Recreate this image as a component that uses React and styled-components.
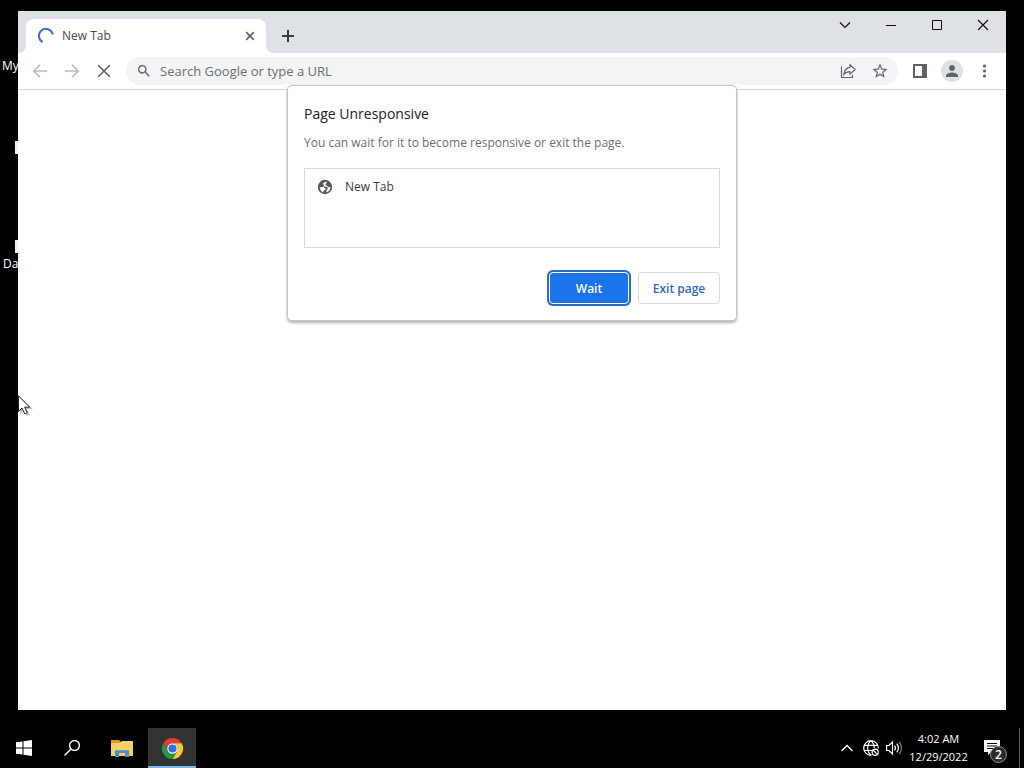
import React from "react";
import styled, { createGlobalStyle, css } from "styled-components";

const GlobalStyle = createGlobalStyle`
  * { box-sizing: border-box; }
  body { margin: 0; background: #000; font-family: "Open Sans", "Noto Sans", sans-serif; }
  button, input { font-family: inherit; }
  button { padding: 0; border: 0; background: none; cursor: default; }
  svg { display: block; flex: none; }
`;

const Screen = styled.div`
  display: flex;
  flex-direction: column;
  min-height: 100vh;
  background: #000;
`;

const Desktop = styled.main`
  position: relative;
  flex: 1;
  display: flex;
  padding: 11px 18px 18px;
`;

const Shortcut = styled.div`
  position: absolute;
  left: ${(p) => p.$x}px;
  top: ${(p) => p.$y}px;
  color: #fff;
  font-size: 12px;
  line-height: 16px;
`;

const ShortcutIcon = styled(Shortcut)`
  width: 3px;
  height: 13px;
  background: #f2f2f2;
`;

const Pointer = styled.svg`
  position: absolute;
  left: 18px;
  top: 395px;
`;

const Window = styled.section`
  position: relative;
  flex: 1;
  min-width: 0;
  display: flex;
  flex-direction: column;
  background: #fff;
`;

const TabStrip = styled.header`
  display: flex;
  align-items: flex-end;
  height: 42px;
  padding-left: 8px;
  background: #dee1e6;
`;

const Tab = styled.div`
  position: relative;
  display: flex;
  align-items: center;
  gap: 8px;
  width: 240px;
  height: 34px;
  padding: 0 8px 0 12px;
  border-radius: 8px 8px 0 0;
  background: #fff;
  color: #45484c;
  font-size: 12px;
  line-height: 16px;

  &::before,
  &::after {
    content: "";
    position: absolute;
    bottom: 0;
    width: 8px;
    height: 8px;
  }
  &::before {
    right: 100%;
    background: radial-gradient(circle at 0 0, transparent 8px, #fff 8px);
  }
  &::after {
    left: 100%;
    background: radial-gradient(circle at 100% 0, transparent 8px, #fff 8px);
  }
`;

const TabTitle = styled.span`
  flex: 1;
`;

const IconButton = styled.button`
  display: flex;
  align-items: center;
  justify-content: center;
  flex: none;
  width: ${(p) => p.$size || 28}px;
  height: ${(p) => p.$size || 28}px;
  border-radius: 50%;
  color: ${(p) => (p.disabled ? "#babcbe" : "#5f6368")};
`;

const NewTabButton = styled(IconButton)`
  margin: 0 0 3px 8px;
  color: #3c4043;
`;

const WindowControls = styled.div`
  display: flex;
  align-self: flex-start;
  margin-left: auto;
`;

const WindowButton = styled.button`
  display: flex;
  align-items: center;
  justify-content: center;
  width: 46px;
  height: 28px;
  color: #111;
`;

const Toolbar = styled.nav`
  display: flex;
  align-items: center;
  gap: 4px;
  height: 37px;
  padding: 0 8px;
  border-bottom: 1px solid #d5d7da;
`;

const Omnibox = styled.div`
  flex: 1;
  min-width: 0;
  display: flex;
  align-items: center;
  gap: 4px;
  height: 28px;
  margin: 0 4px;
  padding: 0 4px 0 10px;
  border-radius: 14px;
  background: #f3f4f5;
  color: #5f6368;
`;

const AddressInput = styled.input`
  flex: 1;
  min-width: 0;
  height: 28px;
  margin-left: 4px;
  padding: 0;
  border: 0;
  outline: 0;
  background: transparent;
  color: #202124;
  font-size: 13px;

  &::placeholder {
    color: #6b6f73;
    opacity: 1;
  }
`;

const Avatar = styled.span`
  display: flex;
  align-items: center;
  justify-content: center;
  width: 22px;
  height: 22px;
  border-radius: 50%;
  background: #dee1e6;
`;

const Dialog = styled.section`
  position: absolute;
  top: 75px;
  left: 50%;
  width: 448px;
  margin-left: -224px;
  padding: 16px;
  border-radius: 4px;
  background: #fff;
  box-shadow: 0 0 0 1px #c4c4c4, 0 2px 3px 1px rgba(0, 0, 0, 0.3);
`;

const DialogTitle = styled.h1`
  margin: 0;
  color: #202124;
  font-size: 14px;
  font-weight: 400;
  line-height: 24px;
`;

const DialogText = styled.p`
  margin: 7px 0 15px;
  color: #6b6f73;
  font-size: 12px;
  line-height: 20px;
`;

const PageList = styled.ul`
  height: 80px;
  margin: 0;
  padding: 8px 12px;
  border: 1px solid #d8dade;
  list-style: none;
`;

const PageItem = styled.li`
  display: flex;
  align-items: center;
  gap: 12px;
  height: 20px;
  color: #3a3d40;
  font-size: 12px;
  line-height: 16px;
`;

const Actions = styled.div`
  display: flex;
  justify-content: flex-end;
  gap: 9px;
  margin-top: 24px;
`;

const ActionButton = styled.button`
  width: 82px;
  height: 32px;
  border-radius: 4px;
  font-size: 12px;
  font-weight: 600;
  ${(p) =>
    p.$primary
      ? css`
          width: 80px;
          border: 1px solid #fff;
          background: #1a73e8;
          color: #fff;
          box-shadow: 0 0 0 2px #2a6ebb;
        `
      : css`
          border: 1px solid #dadce0;
          background: #fff;
          color: #3367c0;
        `}
`;

const Taskbar = styled.footer`
  display: flex;
  height: 40px;
  color: #fff;
`;

const TaskButton = styled.button`
  display: flex;
  align-items: center;
  justify-content: center;
  width: ${(p) => p.$width || 48}px;
  height: 40px;
  color: #fff;
  ${(p) =>
    p.$active &&
    css`
      background: #333;
      box-shadow: inset 0 -2px #76b9ed;
    `}
`;

const Tray = styled.div`
  display: flex;
  align-items: center;
  margin-left: auto;
`;

const Clock = styled.time`
  width: 67px;
  font-size: 11px;
  line-height: 18px;
  text-align: center;
  white-space: nowrap;
`;

const Notifications = styled(TaskButton)`
  position: relative;
  width: 47px;
  padding-right: 8px;
`;

const Count = styled.span`
  position: absolute;
  left: 18px;
  top: 18px;
  width: 17px;
  height: 17px;
  border: 1px solid #8a8a8a;
  border-radius: 50%;
  background: #2b2b2b;
  font-size: 12px;
  font-weight: 600;
  line-height: 15px;
  text-align: center;
`;

const ShowDesktop = styled.button`
  width: 5px;
  height: 40px;
  border-left: 1px solid #5c5c5c;
`;

const Icon = ({ size = 16, box = 24, children, ...rest }) => (
  <svg width={size} height={size} viewBox={`0 0 ${box} ${box}`} fill="currentColor" aria-hidden="true" {...rest}>
    {children}
  </svg>
);

const Line = ({ size = 16, width = 1, d, children }) => (
  <Icon size={size} box={size} fill="none" stroke="currentColor" strokeWidth={width}>
    {d && <path d={d} />}
    {children}
  </Icon>
);

const Spinner = () => (
  <Icon box={16} fill="none" stroke="#3d6fc4" strokeWidth="2">
    <path d="M4.600 14A7 7 0 1 1 14.800 6.500" />
  </Icon>
);

const ChromeLogo = () => (
  <Icon size={23} box={48}>
    <path fill="#e33b2e" d="M4.900 13A22 22 0 0 1 43.100 13H24a11 11 0 0 0-9.500 16.500z" />
    <path fill="#fcc934" d="M43.100 13A22 22 0 0 1 24 46l9.500-16.500A11 11 0 0 0 24 13z" />
    <path fill="#1e9a4b" d="M24 46A22 22 0 0 1 4.900 13l9.600 16.500A11 11 0 0 0 33.500 29.500z" />
    <circle cx="24" cy="24" r="11" fill="#fff" />
    <circle cx="24" cy="24" r="8.600" fill="#2f6fe0" />
  </Icon>
);

const FolderIcon = () => (
  <svg width="22" height="18" viewBox="0 0 22 18" aria-hidden="true">
    <path fill="#d99a2b" d="M0 1h8l2 2v3H0z" />
    <path fill="#f5cf68" d="M0 4h9l2-2h11v15H0z" />
    <path fill="#4a90c4" d="M4 11h14v7h-4v-4H8v4H4z" />
    <path fill="#5fa6d6" d="M4 11h14v1H4z" />
  </svg>
);

export default function App() {
  return (
    <Screen>
      <GlobalStyle />
      <Desktop>
        <Shortcut $x={2} $y={58}>My</Shortcut>
        <ShortcutIcon $x={15} $y={141} />
        <ShortcutIcon $x={15} $y={240} />
        <Shortcut $x={3} $y={256}>Da</Shortcut>

        <Window>
          <TabStrip>
            <Tab>
              <Spinner />
              <TabTitle>New Tab</TabTitle>
              <IconButton $size={16} aria-label="Close tab">
                <Line size={10} width={1.7} d="M1.200 1.200l7.600 7.600M8.800 1.200L1.200 8.800" />
              </IconButton>
            </Tab>
            <NewTabButton aria-label="New tab">
              <Line size={12} width={2} d="M6 0v12M0 6h12" />
            </NewTabButton>
            <WindowControls>
              <WindowButton aria-label="Search tabs">
                <Line size={12} width={1.2} d="M1 3.500l5 5 5-5" />
              </WindowButton>
              <WindowButton aria-label="Minimize">
                <Line size={10} d="M0 5.500h10" />
              </WindowButton>
              <WindowButton aria-label="Maximize">
                <Line size={10} d="M.5 .5h9v9h-9z" />
              </WindowButton>
              <WindowButton aria-label="Close">
                <Line size={12} width={1.2} d="M1 1l10 10M11 1L1 11" />
              </WindowButton>
            </WindowControls>
          </TabStrip>

          <Toolbar>
            <IconButton disabled aria-label="Back">
              <Line width={1.6} d="M15 8H2M8 1.800L1.800 8 8 14.200" />
            </IconButton>
            <IconButton disabled aria-label="Forward">
              <Line width={1.6} d="M1 8h13M8 1.800L14.200 8 8 14.200" />
            </IconButton>
            <IconButton aria-label="Stop">
              <Line size={14} width={1.6} d="M1.200 1.200l11.600 11.600M12.800 1.200L1.200 12.800" />
            </IconButton>
            <Omnibox>
              <Icon>
                <path d="M15.500 14h-.79l-.28-.27A6.470 6.470 0 0 0 16 9.500 6.500 6.500 0 1 0 9.500 16c1.610 0 3.090-.59 4.230-1.570l.27.28v.79l5 4.990L20.490 19l-4.990-5zm-6 0C7.010 14 5 11.990 5 9.500S7.010 5 9.500 5 14 7.010 14 9.500 11.990 14 9.500 14z" />
              </Icon>
              <AddressInput aria-label="Address and search bar" placeholder="Search Google or type a URL" />
              <IconButton aria-label="Share">
                <Line width={1.2}>
                  <path d="M1.500 3.500v11h11V12M10 1.800l5.200 4.700L10 11.200V8.700C7.500 8.700 5.500 9.200 3.800 11.500c.4-4 2.700-6.700 6.200-7.200z" />
                </Line>
              </IconButton>
              <IconButton aria-label="Bookmark this tab">
                <Icon size={18}>
                  <path d="M22 9.240l-7.190-.62L12 2 9.190 8.630 2 9.240l5.460 4.730L5.820 21 12 17.270 18.180 21l-1.630-7.030L22 9.240zM12 15.400l-3.760 2.270 1-4.280-3.320-2.880 4.380-.38L12 6.100l1.710 4.040 4.380.38-3.320 2.880 1 4.280L12 15.400z" />
                </Icon>
              </IconButton>
            </Omnibox>
            <IconButton aria-label="Side panel">
              <Icon size={14} box={14}>
                <path fillRule="evenodd" d="M0 0h14v14H0zM2 2v10h7V2z" />
              </Icon>
            </IconButton>
            <IconButton aria-label="Profile">
              <Avatar>
                <Icon size={18}>
                  <path d="M12 12c2.210 0 4-1.790 4-4s-1.790-4-4-4-4 1.790-4 4 1.790 4 4 4zm0 2c-2.670 0-8 1.340-8 4v2h16v-2c0-2.660-5.330-4-8-4z" />
                </Icon>
              </Avatar>
            </IconButton>
            <IconButton aria-label="Menu">
              <Icon box={16}>
                <circle cx="8.500" cy="3" r="1.600" />
                <circle cx="8.500" cy="8" r="1.600" />
                <circle cx="8.500" cy="13" r="1.600" />
              </Icon>
            </IconButton>
          </Toolbar>

          <Dialog role="dialog" aria-labelledby="dialog-title">
            <DialogTitle id="dialog-title">Page Unresponsive</DialogTitle>
            <DialogText>You can wait for it to become responsive or exit the page.</DialogText>
            <PageList>
              <PageItem>
                <Icon box={16} color="#55585c">
                  <circle cx="8" cy="8" r="7.200" />
                  <path fill="#fff" d="M9.800 2.700C8 2.600 6.200 3.600 5.600 5.200c1 .2 1.500.8 1.300 1.700-.2 1-1.200 1.200-2.200 1.200l-2 .3c.2 2.300 1.600 4.200 3.700 5-.3-1 .2-1.900 1.100-2.200 1.100-.3 1.500-1.100.8-1.900-.7-.7-1.500-.8-1.200-1.400.4-.6 2.100-.5 3 .1.900.7.800 1.700 0 2.500-.7.700-1 1.700-.6 2.800 1.600-.5 3-1.800 3.600-3.400l.3-1.900c-1.100.2-2.100 0-2.800-.8-.6-.7-1.700-.6-2-1.500-.3-1 .7-1.300 1-2z" />
                </Icon>
                New Tab
              </PageItem>
            </PageList>
            <Actions>
              <ActionButton $primary>Wait</ActionButton>
              <ActionButton>Exit page</ActionButton>
            </Actions>
          </Dialog>
        </Window>

        <Pointer width="16" height="22" viewBox="0 0 16 22" aria-hidden="true">
          <path d="M2 2v17l4-4 3 6 3-1-3-6h6z" fill="#000" opacity=".25" />
          <path d="M.5 .8v15.700l3.600-3.400 2.600 5.700 2.500-1.100-2.500-5.500h5z" fill="#fff" stroke="#222" />
        </Pointer>
      </Desktop>

      <Taskbar>
        <TaskButton aria-label="Start">
          <Icon box={16}>
            <path d="M0 2.300l6.500-.9v6.100H0zM7.500 1.200L16 0v7.500H7.500zM0 8.500h6.500v6.100L0 13.700zM7.500 8.500H16V16l-8.500-1.200z" />
          </Icon>
        </TaskButton>
        <TaskButton aria-label="Search">
          <Line>
            <circle cx="10.500" cy="5.500" r="4.900" strokeWidth="1.400" />
            <path d="M7 9L.5 15.500" strokeWidth="1.400" />
          </Line>
        </TaskButton>
        <TaskButton $width={52} aria-label="File Explorer">
          <FolderIcon />
        </TaskButton>
        <TaskButton $active aria-label="Google Chrome">
          <ChromeLogo />
        </TaskButton>
        <Tray>
          <TaskButton $width={24} aria-label="Show hidden icons">
            <Line size={12} width={1.4} d="M.5 9L6 3.500 11.500 9" />
          </TaskButton>
          <TaskButton $width={24} aria-label="Network">
            <Line width={1.2}>
              <path d="M8.500 15.300A7.300 7.300 0 1 1 15.300 8.500M8.500 15.300C3.500 12 3.500 4 8 .7c2.300 2 3.300 4.500 3.300 7.300M1.300 5.300h13.400M1.300 10.500H9" />
              <circle cx="12.200" cy="12.200" r="3.100" />
              <path d="M10 10l4.400 4.400" />
            </Line>
          </TaskButton>
          <TaskButton $width={22} aria-label="Volume">
            <Line width={1.2}>
              <path d="M.6 5.500h2.400l3.500-3.500v12L3 10.500H.6zM8.500 5.500q2 2.500 0 5M10.700 3.700q3.500 4.300 0 8.600" />
              <path d="M13 2q5 6 0 12" opacity=".5" />
            </Line>
          </TaskButton>
          <Clock>
            4:02 AM
            <br />
            12/29/2022
          </Clock>
          <Notifications aria-label="Notifications">
            <Icon box={16}>
              <path fillRule="evenodd" d="M0 0h16v12H7l-3 3v-3H0zM3 3v1h10V3zM3 5.500v1h10v-1zM3 8v1h10V8z" />
            </Icon>
            <Count>2</Count>
          </Notifications>
          <ShowDesktop aria-label="Show desktop" />
        </Tray>
      </Taskbar>
    </Screen>
  );
}
